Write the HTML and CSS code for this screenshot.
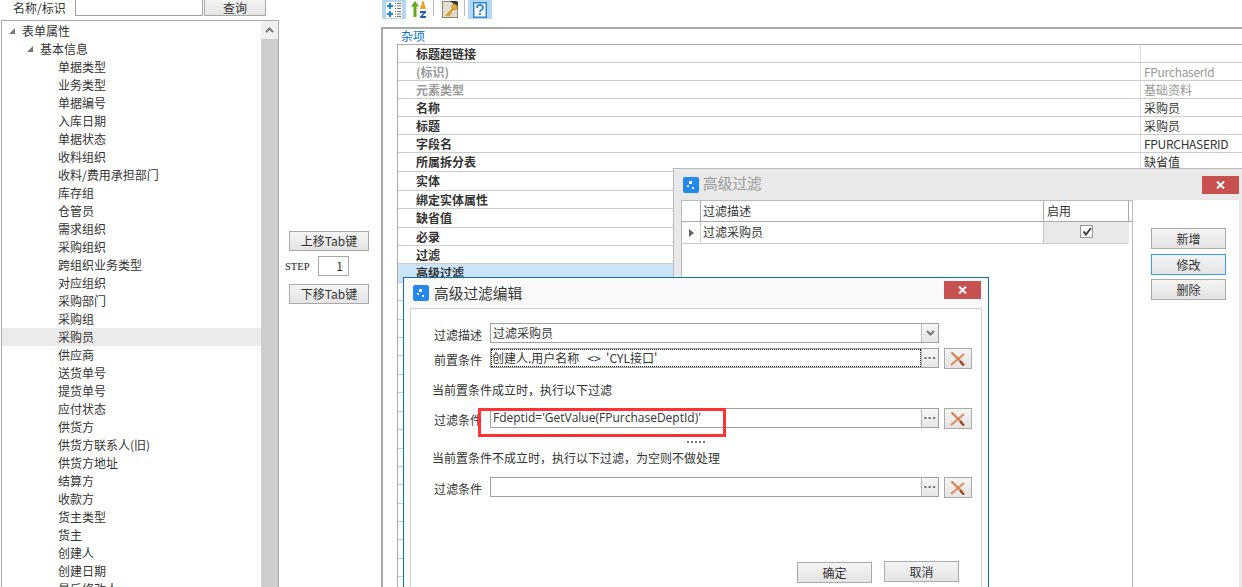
FILE: index.html
```html
<!DOCTYPE html>
<html lang="zh">
<head>
<meta charset="utf-8">
<title>高级过滤编辑</title>
<link rel="stylesheet" href="styles.css">
</head>
<body>
<div class="app">
  <aside class="left">
    <div class="search">
      <span class="search-label">名称/标识</span>
      <span class="search-input"></span>
      <span class="btn search-btn">查询</span>
    </div>
    <div class="tree">
      <div class="tree-list">
        <div class="node l0"><i class="tri"></i>表单属性</div>
        <div class="node l1"><i class="tri"></i>基本信息</div>
        <div class="node l2">单据类型</div>
        <div class="node l2">业务类型</div>
        <div class="node l2">单据编号</div>
        <div class="node l2">入库日期</div>
        <div class="node l2">单据状态</div>
        <div class="node l2">收料组织</div>
        <div class="node l2">收料/费用承担部门</div>
        <div class="node l2">库存组</div>
        <div class="node l2">仓管员</div>
        <div class="node l2">需求组织</div>
        <div class="node l2">采购组织</div>
        <div class="node l2">跨组织业务类型</div>
        <div class="node l2">对应组织</div>
        <div class="node l2">采购部门</div>
        <div class="node l2">采购组</div>
        <div class="node l2 sel">采购员</div>
        <div class="node l2">供应商</div>
        <div class="node l2">送货单号</div>
        <div class="node l2">提货单号</div>
        <div class="node l2">应付状态</div>
        <div class="node l2">供货方</div>
        <div class="node l2">供货方联系人(旧)</div>
        <div class="node l2">供货方地址</div>
        <div class="node l2">结算方</div>
        <div class="node l2">收款方</div>
        <div class="node l2">货主类型</div>
        <div class="node l2">货主</div>
        <div class="node l2">创建人</div>
        <div class="node l2">创建日期</div>
        <div class="node l2">最后修改人</div>
      </div>
      <div class="scrollbar">
        <div class="scroll-up">
          <svg width="9" height="6" viewBox="0 0 9 6"><path d="M1 5l3.500-3.500L8 5" fill="none" stroke="#777" stroke-width="2"/></svg>
        </div>
      </div>
    </div>
  </aside>

  <section class="mid">
    <span class="btn mid-btn">上移Tab键</span>
    <div class="step">
      <span class="step-label">STEP</span>
      <span class="step-input">1</span>
    </div>
    <span class="btn mid-btn">下移Tab键</span>
  </section>

  <main class="right">
    <div class="toolbar">
      <span class="tool active tool-a">
        <svg width="16" height="16" viewBox="0 0 16 16">
          <rect width="16" height="16" fill="#fff"/>
          <path d="M4 1v6M1 4h6M4 9v6M1 12h6" stroke="#1f86d8" stroke-width="2"/>
          <path d="M9 1.500h1M11 1.500h4M9 4h1M11 4h4M9 6.500h1M11 6.500h4M9 9.500h1M11 9.500h4M9 12h1M11 12h4M9 14.500h1M11 14.500h4" stroke="#777" stroke-width="1"/>
        </svg>
      </span>
      <span class="tool tool-b">
        <svg width="16" height="17" viewBox="0 0 16 17">
          <path d="M4 0l4 5.500H5.500V16h-3V5.500H0z" fill="#62a81e"/>
          <path d="M9 8l2.500-8h1L15 8z" fill="#f0a020"/>
          <path d="M9 10h6v1.500L11.500 15H15v2H9v-1.500L12.500 12H9z" fill="#1c5fb0"/>
        </svg>
      </span>
      <span class="sep"></span>
      <span class="tool tool-c">
        <svg width="17" height="17" viewBox="0 0 17 17">
          <rect x="0.500" y="0.500" width="15" height="16" fill="#e4dfcc" stroke="#8d8672"/>
          <path d="M8 0h6l2 2v4z" fill="#333"/>
          <circle cx="12.500" cy="6" r="2.800" fill="#e8a93a" stroke="#a87415" stroke-width=".6"/>
          <path d="M11 8L4 15M6 13l2 2M8 11l1.500 1.500" stroke="#d89a2f" stroke-width="1.800" fill="none"/>
        </svg>
      </span>
      <span class="sep"></span>
      <span class="tool active tool-d">
        <svg width="14" height="16" viewBox="0 0 14 16">
          <rect x="0.750" y="0.750" width="12.500" height="14.500" fill="#fff" stroke="#2a86d0" stroke-width="1.500"/>
          <path d="M4 6c0-4 6-4 6-.5 0 2.500-3 2.500-3 4.500M7 11v2" fill="none" stroke="#2a86d0" stroke-width="1.800"/>
        </svg>
      </span>
    </div>
    <div class="grid-panel">
      <div class="category">杂项</div>
      <div class="grid">
        <div class="row"><b>标题超链接</b><span></span></div>
        <div class="row dim"><b>(标识)</b><span class="latin">FPurchaserId</span></div>
        <div class="row dim"><b>元素类型</b><span>基础资料</span></div>
        <div class="row"><b>名称</b><span>采购员</span></div>
        <div class="row"><b>标题</b><span>采购员</span></div>
        <div class="row"><b>字段名</b><span class="latin">FPURCHASERID</span></div>
        <div class="row tall"><b>所属拆分表</b><span>缺省值</span></div>
        <div class="row tall"><b>实体</b><span></span></div>
        <div class="row"><b>绑定实体属性</b><span></span></div>
        <div class="row tall"><b>缺省值</b><span></span></div>
        <div class="row"><b>必录</b><span></span></div>
        <div class="row"><b>过滤</b><span></span></div>
        <div class="row tall picked"><b>高级过滤</b><span></span></div>
        <div class="row"></div>
        <div class="row tall"></div>
        <div class="row"></div>
        <div class="row"></div>
        <div class="row tall"></div>
        <div class="row"></div>
        <div class="row tall"></div>
        <div class="row"></div>
        <div class="row tall"></div>
        <div class="row"></div>
        <div class="row"></div>
        <div class="row tall"></div>
        <div class="row"></div>
        <div class="row"></div>
        <div class="row tall"></div>
        <div class="row"></div>
        <div class="row"></div>
      </div>
    </div>
  </main>

  <div class="win filter-win">
    <div class="win-title">
      <svg class="win-icon" width="16" height="16" viewBox="0 0 16 16"><rect width="16" height="16" rx="2" fill="#2389ef"/><path d="M6 4h3v3H6zM4 8h2v2H4zM9 10h2v2H9z" fill="#fff"/></svg>
      <span class="win-name muted">高级过滤</span>
      <span class="close">
        <svg width="9" height="8" viewBox="0 0 9 8"><path d="M1 .5l7 7M8 .5l-7 7" stroke="#fff" stroke-width="2"/></svg>
      </span>
    </div>
    <div class="filter-body">
      <div class="filter-table">
        <div class="ft-row ft-head">
          <span class="c0"></span><span class="c1">过滤描述</span><span class="c2">启用</span><span class="c3"></span>
        </div>
        <div class="ft-row ft-data">
          <span class="c0"><i class="arrow"></i></span>
          <span class="c1">过滤采购员</span>
          <span class="c2 checked">
            <span class="check">
              <svg width="10" height="9" viewBox="0 0 10 9"><path d="M1.500 4.500l2.500 3 5-6.500" fill="none" stroke="#444" stroke-width="2"/></svg>
            </span>
          </span>
        </div>
      </div>
      <div class="filter-actions">
        <span class="btn act">新增</span>
        <span class="btn act focus">修改</span>
        <span class="btn act last">删除</span>
      </div>
    </div>
  </div>

  <div class="win edit-win">
    <div class="win-title edit-title">
      <svg class="win-icon" width="16" height="16" viewBox="0 0 16 16"><rect width="16" height="16" rx="2" fill="#2389ef"/><path d="M6 4h3v3H6zM4 8h2v2H4zM9 10h2v2H9z" fill="#fff"/></svg>
      <span class="win-name">高级过滤编辑</span>
      <span class="close">
        <svg width="9" height="8" viewBox="0 0 9 8"><path d="M1 .5l7 7M8 .5l-7 7" stroke="#fff" stroke-width="2"/></svg>
      </span>
    </div>
    <div class="edit-body">
      <div class="form-row r1">
        <span class="f-label">过滤描述</span>
        <div class="field">
          <span class="f-value">过滤采购员</span>
          <span class="f-btn"><svg width="9" height="6" viewBox="0 0 9 6"><path d="M1 1l3.500 3.500L8 1" fill="none" stroke="#777" stroke-width="2"/></svg></span>
        </div>
      </div>
      <div class="form-row r2">
        <span class="f-label">前置条件</span>
        <div class="field">
          <span class="f-value dotted">创建人.用户名称   &lt;&gt;  'CYL接口'</span>
          <span class="f-btn dots">···</span>
        </div>
        <span class="btn x-btn">
          <svg width="16" height="14" viewBox="0 0 16 14"><path d="M1 13L14 2" stroke="#dd8f66" stroke-width="2.200"/><path d="M1.500 .5l11 10.500" stroke="#d97f50" stroke-width="2.200"/><path d="M10 9.500l4 4" stroke="#9c4018" stroke-width="2.200"/></svg>
        </span>
      </div>
      <div class="hint h1">当前置条件成立时，执行以下过滤</div>
      <div class="form-row r3">
        <span class="f-label">过滤条件</span>
        <div class="field">
          <span class="f-value expr">Fdeptid='GetValue(FPurchaseDeptId)'</span>
          <span class="f-btn dots">···</span>
        </div>
        <span class="btn x-btn">
          <svg width="16" height="14" viewBox="0 0 16 14"><path d="M1 13L14 2" stroke="#dd8f66" stroke-width="2.200"/><path d="M1.500 .5l11 10.500" stroke="#d97f50" stroke-width="2.200"/><path d="M10 9.500l4 4" stroke="#9c4018" stroke-width="2.200"/></svg>
        </span>
      </div>
      <div class="splitter"></div>
      <div class="hint h2">当前置条件不成立时，执行以下过滤，为空则不做处理</div>
      <div class="form-row r4">
        <span class="f-label">过滤条件</span>
        <div class="field">
          <span class="f-value"></span>
          <span class="f-btn dots">···</span>
        </div>
        <span class="btn x-btn">
          <svg width="16" height="14" viewBox="0 0 16 14"><path d="M1 13L14 2" stroke="#dd8f66" stroke-width="2.200"/><path d="M1.500 .5l11 10.500" stroke="#d97f50" stroke-width="2.200"/><path d="M10 9.500l4 4" stroke="#9c4018" stroke-width="2.200"/></svg>
        </span>
      </div>
      <div class="form-actions">
        <span class="btn foot ok">确定</span>
        <span class="btn foot">取消</span>
      </div>
      <div class="annotation"></div>
    </div>
  </div>
</div>
</body>
</html>
```

FILE: styles.css
```css
* { box-sizing: border-box; }

html, body {
  margin: 0;
  height: 100%;
  overflow: hidden;
  background: #fff;
}

body {
  font: 12px/18px "Noto Sans CJK SC", "Liberation Sans", sans-serif;
  color: #333;
}

.app {
  position: relative;
  display: flex;
  width: 1242px;
  height: 587px;
  overflow: hidden;
}

.btn {
  display: flex;
  align-items: center;
  justify-content: center;
  border: 1px solid #aaa;
  background: linear-gradient(#f4f4f4, #e4e4e4);
  color: #333;
  white-space: nowrap;
}

/* left column */
.left {
  width: 279px;
  flex: none;
  display: flex;
  flex-direction: column;
}

.search {
  display: flex;
  height: 20px;
  flex: none;
}

.search-label {
  width: 75px;
  padding-left: 13px;
  height: 16px;
  line-height: 16px;
}

.search-input {
  width: 128px;
  height: 16px;
  border: 1px solid #a0a0a0;
  border-top: 0;
  background: #fff;
}

.search-btn {
  width: 62px;
  height: 16px;
  margin-left: 1px;
  border-top: 0;
}

.tree {
  flex: 1;
  display: flex;
  min-height: 0;
  margin-left: 1px;
  border: 1px solid #aaa;
  border-bottom: 0;
  overflow: hidden;
}

.tree-list {
  flex: 1;
  padding-top: 1px;
  overflow: hidden;
}

.node {
  position: relative;
  height: 18px;
  white-space: nowrap;
}

.l0 { padding-left: 20px; }
.l1 { padding-left: 38px; }
.l2 { padding-left: 56px; }
.sel { background: #ebebeb; }

.tri {
  position: absolute;
  top: 6px;
  width: 0;
  height: 0;
  border-style: solid;
  border-width: 0 0 6px 6px;
  border-color: transparent transparent #777 transparent;
}

.l0 .tri { left: 7px; }
.l1 .tri { left: 25px; }

.scrollbar {
  width: 17px;
  flex: none;
  background: #cdcdcd;
}

.scroll-up {
  height: 18px;
  background: #f0f0f0;
  display: flex;
  align-items: center;
  justify-content: center;
}

/* middle column */
.mid {
  width: 102px;
  flex: none;
  padding: 231px 0 0 10px;
  display: flex;
  flex-direction: column;
}

.mid-btn {
  width: 80px;
  height: 20px;
}

.step {
  display: flex;
  align-items: flex-start;
  height: 20px;
  margin: 5px 0 8px -4px;
}

.step-label {
  width: 33px;
  font: 10.500px/22px "Liberation Serif", serif;
  color: #222;
}

.step-input {
  width: 31px;
  height: 20px;
  border: 1px solid #aaa;
  text-align: right;
  padding-right: 5px;
}

/* right column */
.right {
  flex: 1;
  min-width: 0;
  display: flex;
  flex-direction: column;
}

.toolbar {
  height: 27px;
  flex: none;
  display: flex;
  align-items: flex-start;
}

.tool {
  height: 19px;
  display: flex;
  align-items: center;
  justify-content: center;
}

.tool.active { background: #b5d7f1; }
.tool-a { width: 24px; margin-left: 1px; }
.tool-b { width: 18px; margin-left: 4px; }
.tool-c { width: 18px; margin-left: 7px; }
.tool-d { width: 24px; margin-left: 3px; }

.sep {
  width: 1px;
  height: 16px;
  margin-left: 5px;
  background: #bbb;
}

.grid-panel {
  flex: 1;
  min-height: 0;
  border-left: 2px solid #aaa;
  border-top: 2px solid #aaa;
  padding-left: 14px;
  overflow: hidden;
}

.category {
  height: 15px;
  line-height: 14px;
  padding-left: 4px;
  color: #0072c6;
}

.grid {
  border-left: 1px solid #aaa;
  border-top: 1px solid #aaa;
}

.row {
  display: flex;
  height: 18px;
  line-height: 17px;
  border-bottom: 1px solid #ccc;
}

.row.tall { height: 19px; }

.row b {
  width: 742px;
  flex: none;
  padding-left: 18px;
  font-weight: 700;
  color: #333;
}

.row span {
  flex: 1;
  padding-left: 3px;
  border-left: 1px solid #ddd;
  white-space: nowrap;
  overflow: hidden;
}

.row span.latin { letter-spacing: -.3px; }

.row.dim b, .row.dim span { color: #999; }
.row.picked { background: #cce4f7; }

/* floating windows */
.win { position: absolute; }

.filter-win {
  left: 673px;
  top: 168px;
  right: 0;
  bottom: 0;
  background: #e9e9e9;
  border-left: 1px solid #bbb;
  border-top: 1px solid #bbb;
  display: flex;
  flex-direction: column;
}

.win-title {
  display: flex;
  align-items: center;
  height: 31px;
  flex: none;
  padding-left: 9px;
}

.win-icon { flex: none; }

.win-name {
  margin-left: 5px;
  font-size: 14.700px;
  color: #333;
}

.win-name.muted {
  color: #999;
  margin: -3px 0 0 4px;
}

.close {
  margin-left: auto;
  margin-right: 3px;
  width: 37px;
  height: 18px;
  background: #c75050;
  display: flex;
  align-items: center;
  justify-content: center;
}

.filter-body {
  flex: 1;
  display: flex;
  margin: 0 3px 0 7px;
  background: #fff;
  min-height: 0;
}

.filter-table {
  width: 452px;
  flex: none;
  border-left: 1px solid #bbb;
  border-top: 1px solid #bbb;
  border-right: 1px solid #bbb;
}

.ft-row {
  display: flex;
  height: 21px;
}

.ft-head { border-bottom: 1px solid #aaa; }
.ft-data { height: 22px; border-bottom: 1px solid #ccc; margin-right: 4px; }

.ft-row span { line-height: 20px; }
.c0 { width: 19px; flex: none; border-right: 1px solid #aaa; display: flex; align-items: center; justify-content: center; }
.c1 { width: 343px; flex: none; padding-left: 2px; border-right: 1px solid #aaa; }
.c2 { width: 85px; flex: none; padding-left: 3px; border-right: 1px solid #aaa; }
.c3 { flex: 1; }
.ft-data .c0 { border-right-color: #ccc; }
.ft-data .c1 { border-right-color: #ccc; }
.ft-data .c2 { border-right: 0; }

.arrow {
  width: 0;
  height: 0;
  border-style: solid;
  border-width: 4px 0 4px 5px;
  border-color: transparent transparent transparent #666;
}

.c2.checked {
  background: #e9e9e9;
  display: flex;
  justify-content: center;
  padding: 3px 0 0;
}

.check {
  width: 13px;
  height: 13px;
  border: 1px solid #999;
  background: #fff;
  display: flex;
  align-items: center;
  justify-content: center;
}

.filter-actions {
  flex: 1;
  padding: 28px 0 0 18px;
}

.act {
  width: 75px;
  height: 21px;
  margin-bottom: 5px;
}

.act.focus { border-color: #3399ff; margin-bottom: 4px; }

/* edit dialog */
.edit-win {
  left: 403px;
  top: 277px;
  width: 586px;
  height: 320px;
  background: #fafafa;
  border: 1px solid #0b6fb9;
  display: flex;
  flex-direction: column;
}

.edit-title { padding-left: 9px; height: 30px; }
.edit-title .close { margin-right: 7px; margin-top: -6px; }

.edit-body {
  position: relative;
  flex: 1;
  margin: 0 6px;
  background: #fff;
  border: 1px solid #d0d0d0;
  padding: 14px 0 0 23px;
}

.form-row {
  display: flex;
  align-items: flex-start;
  height: 21px;
}

.r1 { height: 20px; }
.r2 { margin-top: 5px; }
.r3 { margin-top: 9px; }
.r4 { margin-top: 10px; }

.f-label {
  width: 56px;
  flex: none;
  line-height: 24px;
}

.field {
  width: 449px;
  height: 20px;
  flex: none;
  display: flex;
  border: 1px solid #a0a0a0;
}

.f-value {
  flex: 1;
  min-width: 0;
  padding-left: 2px;
  line-height: 17px;
  white-space: pre;
  overflow: hidden;
}

.f-value.dotted {
  outline: 1px dotted #222;
  outline-offset: -1px;
  padding-left: 1px;
}

.f-value.expr {
  font-family: "Open Sans", "Noto Sans CJK SC", sans-serif;
}

.f-btn {
  width: 17px;
  flex: none;
  border-left: 1px solid #bbb;
  background: linear-gradient(#f6f6f6, #e6e6e6);
  display: flex;
  align-items: center;
  justify-content: center;
}

.f-btn.dots {
  font: 700 13px/16px "Liberation Sans", sans-serif;
  color: #666;
}

.x-btn {
  width: 28px;
  height: 21px;
  margin-left: 5px;
  flex: none;
}

.hint {
  height: 18px;
  margin-left: -2px;
}

.h1 { margin-top: 12px; }
.h2 { margin-top: 6px; }

.splitter {
  width: 18px;
  height: 2px;
  margin: 12px 0 0 253px;
  background: repeating-linear-gradient(90deg, #777 0 2px, transparent 2px 4px);
}

.form-actions {
  display: flex;
  justify-content: flex-end;
  align-items: flex-start;
  gap: 12px;
  margin-top: 63px;
  padding-right: 22px;
}

.foot {
  width: 75px;
  height: 21px;
}

.foot.ok { margin-top: 1px; }

.annotation {
  position: absolute;
  left: 67px;
  top: 99px;
  width: 248px;
  height: 29px;
  border: 3px solid #ff3333;
}
```
